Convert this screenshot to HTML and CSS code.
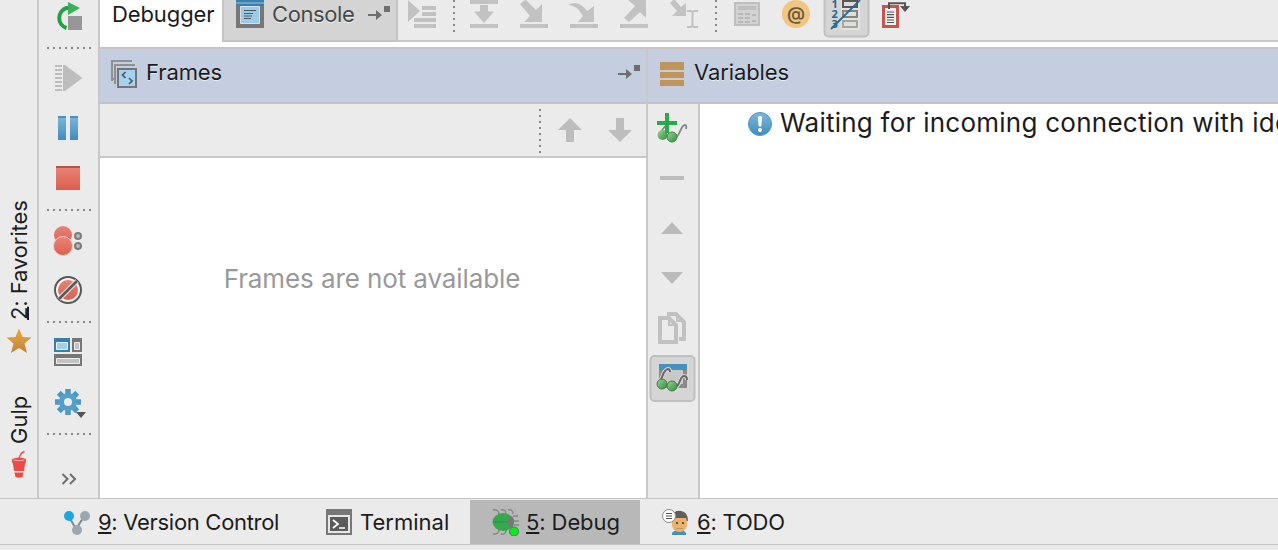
FILE: index.html
```html
<!DOCTYPE html>
<html lang="en">
<head>
  <meta charset="UTF-8" />
  <meta name="viewport" content="width=device-width, initial-scale=1.0"/>
  <title>Debugger</title>
  <link rel="stylesheet" href="styles.css">
</head>
<body>
  <!-- shared gradients -->
  <svg class="defs" width="0" height="0">
    <defs>
      <linearGradient id="blue" x1="0" y1="0" x2="0" y2="1"><stop offset="0" stop-color="#7fb6d8"/><stop offset="1" stop-color="#3f8dbd"/></linearGradient>
      <linearGradient id="red" x1="0" y1="0" x2="0" y2="1"><stop offset="0" stop-color="#e88476"/><stop offset="1" stop-color="#dc5f50"/></linearGradient>
      <linearGradient id="green" x1="0" y1="0" x2="1" y2="1"><stop offset="0" stop-color="#9fd09c"/><stop offset="1" stop-color="#2f9038"/></linearGradient>
      <linearGradient id="gold" x1="0" y1="0" x2="0" y2="1"><stop offset="0" stop-color="#eea936"/><stop offset="1" stop-color="#bd8340"/></linearGradient>
    </defs>
  </svg>

  <div class="main">
    <div class="stripe">
      <div class="stripe-tab favorites">
        <span class="vertical"><u>2</u>: Favorites</span>
        <svg width="26" height="26"><path d="M13 0.500l3.500 8.500 9 .600-7 6 2.500 9.500-8-5.200-8 5.200 2.500-9.500-7-6 9-.600z" fill="url(#gold)"/></svg>
      </div>
      <div class="stripe-tab gulp">
        <span class="vertical">Gulp</span>
        <svg width="14" height="28"><path d="M7 7l2.500-5 3-1.500" fill="none" stroke="#ef4a48" stroke-width="1.500"/><path d="M0 8q7-3 14 0v3l-1 2-1 7H2L1 13l-1-2zM2.500 21.500h9L10.500 26q-3.500 1.500-7 0z" fill="#ef4a48"/><path d="M1.500 9q5.500 1.500 11 0" stroke="#f6b5b3" fill="none"/></svg>
      </div>
    </div>

    <div class="actions">
      <svg class="btn" viewBox="0 0 50 50"><path d="M23.500 37A10.500 10.500 0 0 1 23.500 17H26" fill="none" stroke="#27a045" stroke-width="4"/><path d="M25 11l12 6-12 7z" fill="#36b257"/><path d="M25 25h14v14H25z" fill="#979797"/></svg>
      <div class="dots"></div>
      <svg class="btn" viewBox="0 0 50 50"><path d="M12 13h7M12 17h7M12 21h7M12 25h7M12 29h7M12 33h7M12 37h7" stroke="#bdbdbd" stroke-width="2"/><path d="M20 12h2l17.500 13L22 38h-2z" fill="#bdbdbd"/></svg>
      <svg class="btn" viewBox="0 0 50 50"><path d="M15 13h8v24h-8zM27 13h8v24h-8z" fill="url(#blue)"/><path d="M15 13h8v2h-8zM27 13h8v2h-8z" fill="#4a90c2"/></svg>
      <svg class="btn" viewBox="0 0 50 50"><path d="M13 13h24v24H13z" fill="url(#red)"/><path d="M13 13h24v2H13z" fill="#b94f45"/></svg>
      <div class="dots"></div>
      <svg class="btn" viewBox="0 0 50 50"><circle cx="20" cy="20" r="9" fill="url(#red)"/><circle cx="20" cy="31" r="9.500" fill="url(#red)" stroke="#f3c9c2"/><g fill="#b9b9b9" stroke="#7c7c7c" stroke-width="2"><circle cx="35" cy="21" r="3"/><circle cx="35" cy="31" r="3"/></g></svg>
      <svg class="btn" viewBox="0 0 50 50"><circle cx="25" cy="25" r="13" fill="#f4f4f4" stroke="#57585a" stroke-width="2"/><circle cx="25" cy="25" r="10" fill="url(#red)"/><path d="M16 34L34 16" stroke="#f3d9d5" stroke-width="5"/><path d="M16 34L34 16" stroke="#57585a" stroke-width="2.500"/></svg>
      <div class="dots"></div>
      <svg class="btn" viewBox="0 0 50 50"><path d="M11 11h16v14H11z" fill="#367fac"/><path d="M29 11h10v14H29zM11 27h28v12H11z" fill="#777"/><g stroke="#efefef"><path d="M13.500 15.500h11v7h-11z" fill="#a0d0ec"/><path d="M31.500 15.500h5v7h-5zM13.500 31.500h23v5h-23z" fill="#c2c2c2"/></g></svg>
      <svg class="btn" viewBox="0 0 50 50"><g stroke="#4c98c6" stroke-width="5.500"><path d="M25 12v26M12 25h26M15.800 15.800l18.400 18.400M34.200 15.800L15.800 34.200"/></g><circle cx="25" cy="25" r="9" fill="#55a0ca"/><circle cx="25" cy="25" r="4" fill="#ececec"/><path d="M33 35h10l-5 6z" fill="#555"/></svg>
      <div class="dots"></div>
      <svg class="more" width="16" height="12"><path d="M1.500 1l5 5-5 5M9 1l5 5-5 5" fill="none" stroke="#6e6e6e" stroke-width="2"/></svg>
    </div>

    <div class="debugger">
      <div class="tabs">
        <div class="tab active"><span class="t-debugger">Debugger</span></div>
        <div class="tab console">
          <svg width="28" height="28"><path d="M0 0h28v28H0z" fill="#777"/><path d="M0 0h28v6H0z" fill="#3c7fad"/><path d="M0 2h28v2H0z" fill="#65a6cb"/><path d="M4.500 6.500h19v17h-19z" fill="#9ccbe6" stroke="#ddd"/><path d="M8 10.500h12M8 13.500h9M8 16h8M8 18.500h7" stroke="#4d5961"/></svg>
          <span class="t-console">Console</span>
          <svg class="pin" width="22" height="14"><path d="M0 9h9" stroke="#6e6e6e" stroke-width="2"/><path d="M8 4l6 5-6 5zM16 0h6v6h-6z" fill="#6e6e6e"/></svg>
        </div>
        <div class="steps">
          <svg class="step" viewBox="0 0 50 40"><path d="M10 0l12 11-12 11zM24 6h14v4H24zM24 12h14v4H24zM16 18h22v4H16zM16 24h22v4H16z" fill="#c2c2c2"/></svg>
          <div class="vdots"></div>
          <svg class="step" viewBox="0 0 50 40"><path d="M10 0h28v4H10zM10 24h28v4H10zM20 5h8v6.500h6L24 23 14 11.500h6z" fill="#c2c2c2"/></svg>
          <svg class="step" viewBox="0 0 50 40"><path d="M10 24h28v4H10zM10 4l5-4h1l10 10 6-6v18H14l6-6z" fill="#c2c2c2"/></svg>
          <svg class="step" viewBox="0 0 50 40"><path d="M10 24h28v4H10zM8 5q10-6 19 6l7-5v16H18l5-6Q17 5 8 5z" fill="#c2c2c2"/></svg>
          <svg class="step" viewBox="0 0 50 40"><path d="M10 24h28v4H10zM18 0h18v18l-6-6-11 10-5-4 11-12z" fill="#c2c2c2"/></svg>
          <svg class="step" viewBox="0 0 50 40"><path d="M10 3l3-3h2l6 7 5-4v13H12l5-5z" fill="#c2c2c2"/><path d="M27 11h4l1.500 1.500L34 11h4M32.500 12v14M27 27h4l1.500-1.500L34 27h4" fill="none" stroke="#c2c2c2" stroke-width="2"/></svg>
          <div class="vdots"></div>
          <svg class="step" viewBox="0 0 50 40"><path d="M13 3h24v22H13z" fill="#d2d2d2" stroke="#bfbfbf" stroke-width="2"/><path d="M16 6h18v4H16z" fill="#c0c0c0"/><path d="M16 14h5M23 14h5M16 18h5M23 18h5M16 22h5M23 22h5M30 15h4M30 21h4" stroke="#b8b8b8" stroke-width="2"/></svg>
          <svg class="step" viewBox="0 0 50 40"><circle cx="24" cy="14" r="14" fill="#f2c680"/><text x="24" y="19.500" class="at">@</text></svg>
          <svg class="step" viewBox="0 0 50 40"><rect class="pressed" x="2.500" y="-10" width="44" height="46.500" rx="4"/><g class="digits"><text x="9.500" y="8">1</text><text x="9.500" y="18">2</text><text x="9.500" y="28">3</text></g><path d="M19 0h19v30H19z" fill="#e2e2de"/><g fill="#dedede" stroke-width="2"><path d="M21 1h14v6H21z" stroke="#595854"/><path d="M21 11h14v6H21z" stroke="#85847f"/><path d="M21 21h14v6H21z" stroke="#a5a49f"/></g><path d="M9 29L38 0" stroke="#28698f" stroke-width="1.800"/></svg>
          <svg class="step" viewBox="0 0 50 40"><path d="M11.500 6.500h14v20h-14z" fill="#efefef" stroke="#c4574b" stroke-width="3"/><path d="M15 12h7M15 14.700h7M15 17.400h7M15 20h7M15 22.500h7" stroke="#555" stroke-width="1.200"/><path d="M17 9V3.200h16V7" fill="none" stroke="#555" stroke-width="2"/><path d="M28 6h10l-5 6z" fill="#555"/></svg>
        </div>
      </div>

      <div class="panels">
        <div class="panel frames">
          <div class="panel-header">
            <svg width="26" height="28"><path d="M1 21V1h20M1 19h2M4 24V5h20" fill="none" stroke="#909090" stroke-width="2"/><path d="M7 9h18v18H7z" fill="#a5d2ee" stroke="#757575" stroke-width="2"/><path d="M14.500 12l-3 3 3 3M18 18l3 3-3 3" fill="none" stroke="#4e5963" stroke-width="1.700"/></svg>
            <span class="t-frames">Frames</span>
            <svg class="pin" width="22" height="14"><path d="M0 9h9" stroke="#6e6e6e" stroke-width="2"/><path d="M8 4l6 5-6 5zM16 0h6v6h-6z" fill="#6e6e6e"/></svg>
          </div>
          <div class="frames-bar">
            <div class="vdots tall"></div>
            <svg class="btn" viewBox="0 0 50 50"><path d="M25 14l12 12h-8v12h-8V26h-8z" fill="#bdbdbd"/></svg>
            <svg class="btn" viewBox="0 0 50 50"><path d="M21 14h8v12h8L25 38 13 26h8z" fill="#bdbdbd"/></svg>
          </div>
          <div class="empty"><span>Frames are not available</span></div>
        </div>

        <div class="panel variables">
          <div class="panel-header">
            <svg width="24" height="26"><path d="M0 1h24v8H0zM0 11h24v6H0zM0 19h24v6H0z" fill="#c0955c"/></svg>
            <span class="t-variables">Variables</span>
          </div>
          <div class="variables-body">
            <div class="watch-bar">
              <svg class="btn" viewBox="0 0 50 50"><path d="M14 27l7-8M28 34c4-2 5-12 9-12q2 0 1 4" fill="none" stroke="#868686" stroke-width="1.800"/><circle cx="14.500" cy="32" r="5" fill="url(#green)"/><circle cx="24" cy="34" r="5" fill="url(#green)" stroke="#3d8440"/><path d="M17 10h4v8h8v4h-8v8h-4v-8H9v-4h8z" fill="#2aaa4b"/></svg>
              <svg class="btn" viewBox="0 0 50 50"><path d="M12 23h24v4H12z" fill="#bdbdbd"/></svg>
              <svg class="btn" viewBox="0 0 50 50"><path d="M13 31l11-12 11 12z" fill="#bababa"/></svg>
              <svg class="btn" viewBox="0 0 50 50"><path d="M13 19h22L24 31z" fill="#bababa"/></svg>
              <svg class="btn" viewBox="0 0 50 50"><path d="M19 11h9l8 8v17h-5" fill="none" stroke="#c1c1c1" stroke-width="4"/><path d="M10 13h13l7 8v20H10z" fill="#ebebeb"/><path d="M12 15h9l7 7v17H12z" fill="#ebebeb" stroke="#c1c1c1" stroke-width="4"/><path d="M21 14v8h8M29 11v7h7" fill="none" stroke="#c1c1c1" stroke-width="2"/></svg>
              <svg class="btn" viewBox="0 0 50 50"><rect class="pressed" x="2.500" y="3" width="44" height="45" rx="4"/><path d="M11 17h28v18H11z" fill="#8b8b8b"/><path d="M15 17h20v14H15z" fill="#c8c8c8"/><path d="M11 11h28v6H11z" fill="#4690bc"/><path d="M12 28c3-4 3-11 8-12q2 0 2 3M28 34c4-2 4-11 8-11q3 0 3 4" fill="none" stroke="#d8d8d8" stroke-width="4"/><path d="M12 28c3-4 3-11 8-12q2 0 2 3M28 34c4-2 4-11 8-11q3 0 3 4" fill="none" stroke="#686868" stroke-width="2"/><circle cx="14" cy="31" r="5" fill="url(#green)" stroke="#3d8440"/><circle cx="24" cy="33" r="5" fill="url(#green)" stroke="#3d8440"/></svg>
            </div>
            <div class="message">
              <svg width="24" height="24"><circle cx="12" cy="12" r="11.500" fill="url(#blue)" stroke="#4f96bf"/><path d="M9.800 5q2.200-2 4.400 0l-1 9.500h-2.400z" fill="#fff"/><circle cx="12" cy="18" r="2" fill="#fff"/></svg>
              <span>Waiting for incoming connection with ide</span>
            </div>
          </div>
        </div>
      </div>
    </div>
  </div>

  <div class="bottom">
    <div class="tool vcs">
      <svg width="27" height="26"><path d="M5 6l8 14 9-14" fill="none" stroke="#7d8a94" stroke-width="2"/><circle cx="6" cy="7" r="5" fill="#1ba7df"/><circle cx="22" cy="7" r="5" fill="#9aa7b0"/><circle cx="14" cy="21" r="5" fill="#9aa7b0"/></svg>
      <span><u>9</u>: Version Control</span>
    </div>
    <div class="tool terminal">
      <svg width="26" height="26"><path d="M0 0h26v26H0z" fill="#777"/><path d="M3 7h20v16H3z" fill="#5b5b5b" stroke="#e8e8e8" stroke-width="2"/><path d="M7 11l5 4-5 4M13 19h6" fill="none" stroke="#fff" stroke-width="1.700"/></svg>
      <span>Terminal</span>
    </div>
    <div class="tool selected">
      <svg width="28" height="28"><path d="M1 2q6-1 6 5M9 2q5-1 5 4M16 2q5-1 5 4M1 26q6 1 6-5M9 26q5 1 5-4M26 8h-5M27 13h-5M27 17h-5" fill="none" stroke="#888" stroke-width="1.500"/><ellipse cx="11" cy="14" rx="10.500" ry="9" fill="#36a94f"/><path d="M1 14h18" stroke="#278e3d"/><ellipse cx="19" cy="14" rx="3" ry="6" fill="#777"/><circle cx="22" cy="23.500" r="4.500" fill="#00f018" stroke="#55775a"/></svg>
      <span><u>5</u>: Debug</span>
    </div>
    <div class="tool todo">
      <svg width="27" height="28"><path d="M10 27v-2q2-3 7-3t7 3v2z" fill="#3f90c1"/><path d="M10 9h15v9q-2 6-7.500 6T10 18z" fill="#e9b26e"/><path d="M10 13V7q3-5 9-4 7 1 7 10h-1l-1-3H11z" fill="#5e5e5e"/><path d="M14 15h2M20 15h2" stroke="#6b5034" stroke-width="2"/><path d="M14 20.500h7" stroke="#cf9452"/><circle cx="7" cy="8" r="6.500" fill="#fff" stroke="#8a8a8a"/><path d="M4 5.500h6M4 8h6M4 10.500h6" stroke="#555" stroke-width="1.200"/></svg>
      <span><u>6</u>: TODO</span>
    </div>
  </div>
</body>
</html>
```
FILE: styles.css
```css
body {
  margin: 0;
  width: 1278px;
  height: 550px;
  overflow: hidden;
  display: flex;
  flex-direction: column;
  background: #ebebeb;
  font-family: Inter, "Liberation Sans", sans-serif;
  font-size: 22px;
  line-height: 28px;
  color: #1c1c1c;
  white-space: nowrap;
}

.defs {
  height: 0;
}

svg {
  display: block;
  flex: none;
}

u {
  text-decoration-thickness: 2px;
  text-underline-offset: 2px;
  text-decoration-skip-ink: none;
}

.main {
  display: flex;
  height: 498px;
}

/* left tool window stripe */
.stripe {
  width: 37px;
  border-right: 2px solid #c8c8c8;
}

.stripe-tab {
  display: flex;
  flex-direction: column;
  align-items: center;
}

.favorites {
  padding-top: 200px;
}

.vertical {
  writing-mode: vertical-rl;
  transform: rotate(180deg);
}

.vertical u {
  text-underline-offset: -4px;
}

.favorites .vertical {
  height: 120px;
  letter-spacing: -0.1px;
}

.favorites svg {
  margin-top: 8px;
}

.gulp {
  padding-top: 42px;
}

.gulp .vertical {
  height: 48px;
}

.gulp svg {
  margin-top: 7px;
}

/* debugger actions */
.actions {
  box-sizing: border-box;
  width: 61px;
  height: 498px;
  padding-left: 4px;
  border-right: 2px solid #c8c8c8;
}

.btn {
  width: 50px;
  height: 50px;
}

.actions .btn:first-child {
  margin-top: -9px;
}

.dots {
  width: 44px;
  height: 2px;
  padding: 6px 0 4px;
  margin-left: 4px;
  background: repeating-linear-gradient(90deg, #888 0 2px, transparent 2px 6px) content-box;
}

.vdots {
  width: 2px;
  height: 32px;
  padding: 0 5px;
  background: repeating-linear-gradient(180deg, #888 0 2px, transparent 2px 6px) content-box;
}

.more {
  margin: 34px 0 0 18px;
}

.debugger {
  flex: 1;
  min-width: 0;
  display: flex;
  flex-direction: column;
  background: #fff;
}

.tabs {
  display: flex;
  height: 42px;
}

.tab {
  box-sizing: border-box;
}

.active {
  width: 122px;
  padding-left: 12px;
}

.t-debugger {
  letter-spacing: -0.1px;
}

.console {
  display: flex;
  width: 176px;
  padding-left: 12px;
  background: #d4d4d4;
  border: 2px solid #c4c4c4;
  border-top: none;
  color: #484848;
  text-shadow: 0 1px 0 #f0f0f0;
}

.t-console {
  width: 96px;
  padding-left: 8px;
  letter-spacing: -0.4px;
}

.console .pin {
  margin-top: 6px;
}

.steps {
  flex: 1;
  display: flex;
  background: #ebebeb;
  border-bottom: 2px solid #c8c8c8;
}

.step {
  width: 50px;
  height: 40px;
}

.pressed {
  fill: #d5d5d5;
  stroke: #c0c0c0;
  stroke-width: 2;
}

.at {
  font-size: 18px;
  font-weight: 600;
  text-anchor: middle;
  fill: #6b5a40;
}

.digits {
  font: bold 11px "Noto Sans", sans-serif;
  fill: #28698f;
}

.panels {
  flex: 1;
  display: flex;
  margin-top: 5px;
  border-top: 2px solid #c6c3c0;
}

.panel {
  display: flex;
  flex-direction: column;
}

.frames {
  width: 546px;
  border-right: 2px solid #c8c8c8;
}

.variables {
  flex: 1;
  min-width: 0;
}

.panel-header {
  box-sizing: border-box;
  display: flex;
  height: 55px;
  padding: 11px 6px 0 11px;
  background: #c5cee0;
  border-bottom: 2px solid #bfc2c8;
  text-shadow: 0 1px 0 #e9edf5;
  letter-spacing: -0.1px;
}

.t-frames {
  flex: 1;
  padding-left: 9px;
  margin-top: -2px;
}

.frames .pin {
  margin-top: 5px;
}

.variables .panel-header {
  padding-left: 12px;
  padding-top: 12px;
}

.t-variables {
  padding-left: 10px;
  margin-top: -3px;
}

.frames-bar {
  display: flex;
  justify-content: flex-end;
  height: 52px;
  padding-right: 1px;
  background: #ebebeb;
  border-bottom: 2px solid #c8c8c8;
}

.tall {
  height: 44px;
  margin-top: 5px;
  padding: 0 4px 0 6px;
}

.empty {
  padding-top: 107px;
  text-align: center;
  font-size: 26px;
  letter-spacing: -0.1px;
  color: #999;
}

.empty span {
  padding-right: 2px;
}

.variables-body {
  flex: 1;
  display: flex;
  overflow: hidden;
}

.watch-bar {
  width: 50px;
  background: #ebebeb;
  border-right: 2px solid #c8c8c8;
}

.watch-bar .btn:first-child {
  margin-top: -1px;
}

.message {
  display: flex;
  padding: 8px 0 0 48px;
  font-size: 26px;
  letter-spacing: 0.25px;
}

.message svg {
  margin-right: 8px;
}

.message span {
  margin-top: -3px;
}

/* bottom tool window bar */
.bottom {
  display: flex;
  height: 45px;
  border-top: 1px solid #c4c4c4;
  border-bottom: 1px solid #c4c4c4;
}

.tool {
  box-sizing: border-box;
  display: flex;
  align-items: center;
}

.tool span {
  margin-left: 8px;
}

.vcs {
  width: 326px;
  padding-left: 63px;
  letter-spacing: -0.3px;
}

.terminal {
  width: 144px;
}

.selected {
  width: 170px;
  padding-left: 22px;
  margin-top: 1px;
  background: #b8b8b8;
  letter-spacing: -0.1px;
}

.selected span {
  margin-left: 6px;
}

.todo {
  padding-left: 22px;
  letter-spacing: -0.2px;
}
```
